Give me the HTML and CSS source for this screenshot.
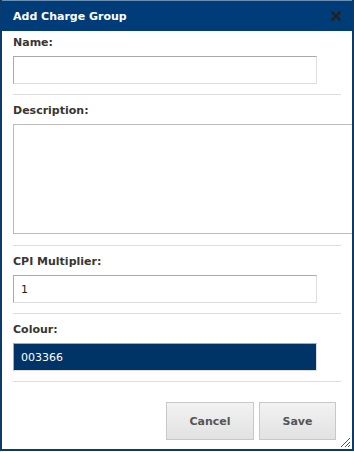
FILE: index.html
```html
<!DOCTYPE html>
<html lang="en">
<head>
    <meta charset="UTF-8">
    <title>Add Charge Group</title>
    <link rel="stylesheet" href="styles.css">
</head>
<body>
    <div class="dialog">
        <!-- Title bar -->
        <div class="titlebar">
            <span class="title">Add Charge Group</span>
            <svg class="close" width="10" height="10" viewBox="0 0 10 10">
                <path d="M1.5 1.5 L8.5 8.5 M8.5 1.5 L1.5 8.5" stroke="#222" stroke-width="2.6" stroke-linecap="square"/>
            </svg>
        </div>

        <form class="content">
            <div class="field">
                <label for="name">Name:</label>
                <input type="text" id="name" class="text">
            </div>
            <div class="field">
                <label for="description">Description:</label>
                <textarea id="description"></textarea>
            </div>
            <div class="field">
                <label for="cpi">CPI Multiplier:</label>
                <input type="text" id="cpi" class="text" value="1">
            </div>
            <div class="field">
                <label for="colour">Colour:</label>
                <input type="text" id="colour" class="text colour" value="003366">
            </div>

            <div class="buttons">
                <button type="button" class="btn cancel">Cancel</button>
                <button type="submit" class="btn save">Save</button>
            </div>
        </form>

        <svg class="grip" width="12" height="12" viewBox="0 0 12 12">
            <path d="M11 2 L2 11 M11 6 L6 11 M11 9 L9 11" stroke="#555" stroke-width="1"/>
        </svg>
    </div>
</body>
</html>
```

FILE: styles.css
```css
body {
    margin: 0;
    padding: 0;
    background-color: #fff;
    font-family: "DejaVu Sans", Verdana, sans-serif;
}
.dialog {
    position: relative;
    width: 350px;
    height: 449px;
    border: 2px solid #0b3a6c;
    border-top: none;
    background: #fff;
    overflow: hidden;
}
.titlebar {
    display: flex;
    align-items: center;
    justify-content: space-between;
    height: 30px;
    padding: 0 11px 0 11px;
    background-color: #003c78;
    border-top: 1px solid #6d8fb5;
}
.title {
    color: #fff;
    font-size: 11px;
    font-weight: bold;
}
.close {
    display: block;
}
.content {
    padding: 4px 11px 0 11px;
}
.field {
    border-bottom: 1px solid #ddd;
    margin-bottom: 8px;
}
label {
    display: block;
    font-size: 11px;
    font-weight: bold;
    line-height: 16px;
    color: #3b3530;
    margin-bottom: 5px;
}
input.text {
    display: block;
    box-sizing: border-box;
    width: 304px;
    height: 28px;
    margin: 0 0 10px 0;
    padding: 0 7px;
    border: 1px solid #ddd;
    border-top-color: #aaa;
    border-left-color: #aaa;
    font-family: "DejaVu Sans", Verdana, sans-serif;
    font-size: 11px;
    color: #222;
    background: #fff;
}
input.colour {
    background-color: #003366;
    color: #fff;
}
textarea {
    display: block;
    box-sizing: border-box;
    width: 340px;
    height: 110px;
    margin: 0 0 11px 0;
    border: 1px solid #bbb;
    resize: none;
}
.buttons {
    display: flex;
    justify-content: flex-end;
    gap: 5px;
    padding: 12px 5px 0 0;
}
.btn {
    height: 38px;
    border: 1px solid #c8c8c8;
    background: linear-gradient(#f2f2f2, #e2e2e2);
    color: #555;
    font-family: "DejaVu Sans", Verdana, sans-serif;
    font-size: 11px;
    font-weight: bold;
    cursor: pointer;
}
.cancel {
    width: 88px;
}
.save {
    width: 77px;
}
.grip {
    position: absolute;
    right: 1px;
    bottom: 1px;
}
```
